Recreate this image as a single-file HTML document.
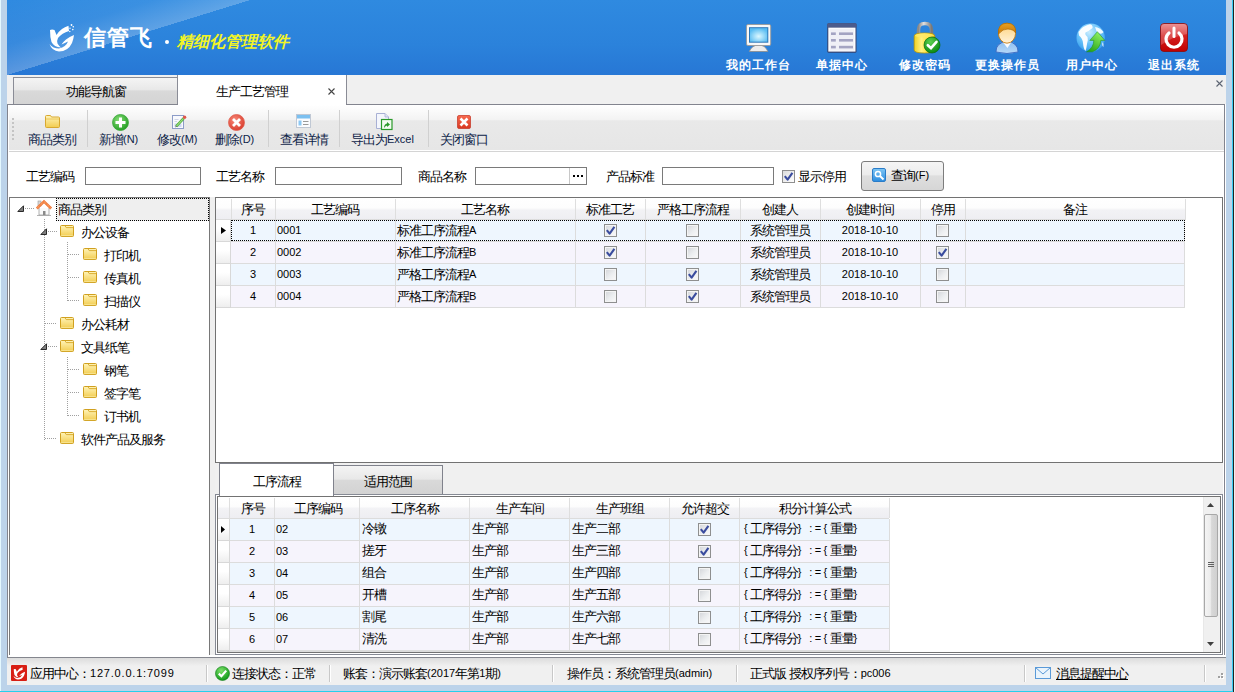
<!DOCTYPE html><html><head><meta charset="utf-8"><style>
*{margin:0;padding:0;box-sizing:border-box}
html,body{width:1235px;height:692px;overflow:hidden;background:#bcd3ea;font-family:"Liberation Sans",sans-serif;font-size:12px;color:#000}
.a{position:absolute}
.t{position:absolute;white-space:nowrap;line-height:14px;font-size:13px;letter-spacing:-1px}
.m{font-family:"Liberation Sans",sans-serif;font-size:11px;position:relative;top:-1px;letter-spacing:0}
svg{position:absolute;overflow:visible}
</style></head><body>
<div class="a" style="left:0px;top:0px;width:1px;height:692px;background:#e4f8ff"></div>
<div class="a" style="left:1232px;top:0px;width:1px;height:692px;background:#38ccf4"></div>
<div class="a" style="left:1233px;top:0px;width:1px;height:692px;background:#222"></div>
<div class="a" style="left:1234px;top:0px;width:1px;height:692px;background:#f0f0f0"></div>
<div class="a" style="left:0px;top:691px;width:1232px;height:1px;background:#26d0ec"></div>
<div class="a" style="left:7px;top:0px;width:1219px;height:75px;background:linear-gradient(180deg,#2f8ae0 0%,#2b82db 60%,#2777d5 100%)"></div>
<div class="a" style="left:7px;top:0px;width:243px;height:75px;background:linear-gradient(to bottom right,rgba(255,255,255,0) 0%,rgba(255,255,255,0.06) 30%,rgba(255,255,255,0.24) 50%,rgba(255,255,255,0) 50.1%)"></div>

<svg style="left:746px;top:24px" width="26" height="28" viewBox="0 0 26 28">
 <defs><radialGradient id="scr" cx="0.5" cy="0.6" r="0.6"><stop offset="0" stop-color="#dcf8ff"/><stop offset="1" stop-color="#58bcf2"/></radialGradient></defs>
 <path d="M3.3 27.5 Q6 21 12.6 21 Q19.2 21 21.9 27.5 Z" fill="#ececec" stroke="#8a8a8a" stroke-width="0.8"/>
 <rect x="0.5" y="0.5" width="24.2" height="21" rx="1.5" fill="#f8f8f8" stroke="#9a9a9a" stroke-width="0.9"/>
 <rect x="3" y="3.2" width="19.3" height="15.5" fill="#2a76b8"/>
 <rect x="4" y="4.2" width="17.3" height="13.5" fill="url(#scr)"/>
</svg>
<svg style="left:827px;top:23px" width="30" height="30" viewBox="0 0 30 30">
 <rect x="0.3" y="0.3" width="29.2" height="29.4" rx="1.5" fill="#34406c"/>
 <rect x="0.3" y="0.3" width="29.2" height="4.3" rx="1" fill="#4c5c8c"/>
 <rect x="1.3" y="4.6" width="27.2" height="24" fill="#fbfbfd"/>
 <rect x="3" y="6" width="24" height="21.5" fill="#f0f0f6"/>
 <rect x="4" y="9.4" width="4.8" height="2.6" fill="#a4a4c2"/><rect x="12" y="9.4" width="14" height="2.6" fill="#a4a4c2"/>
 <rect x="4" y="16" width="4.8" height="2.6" fill="#a4a4c2"/><rect x="12" y="16" width="14" height="2.6" fill="#a4a4c2"/>
 <rect x="4" y="22.8" width="4.8" height="2.6" fill="#a4a4c2"/><rect x="12" y="22.8" width="14" height="2.6" fill="#a4a4c2"/>
</svg>
<svg style="left:913px;top:22px" width="28" height="32" viewBox="0 0 28 32">
 <defs><linearGradient id="lk" x1="0" y1="0" x2="1" y2="0"><stop offset="0" stop-color="#f0d020"/><stop offset="0.35" stop-color="#fff080"/><stop offset="0.7" stop-color="#ffe030"/><stop offset="1" stop-color="#d8a800"/></linearGradient>
 <linearGradient id="sh" x1="0" y1="0" x2="1" y2="0"><stop offset="0" stop-color="#8a8a8a"/><stop offset="0.4" stop-color="#e0e0e0"/><stop offset="1" stop-color="#7a7a7a"/></linearGradient>
 <radialGradient id="gc" cx="0.4" cy="0.3" r="0.7"><stop offset="0" stop-color="#5cd050"/><stop offset="1" stop-color="#0a8a12"/></radialGradient></defs>
 <path d="M5.5 16 V8 Q5.5 1.5 12 1.5 Q18.5 1.5 18.5 8 V16" fill="none" stroke="url(#sh)" stroke-width="3.4"/>
 <path d="M1.2 14 Q1.2 11 11.5 11 Q21.8 11 21.8 14 V28 Q21.8 31 11.5 31 Q1.2 31 1.2 28 Z" fill="url(#lk)" stroke="#c09a00" stroke-width="0.8"/>
 <ellipse cx="11.5" cy="13.5" rx="9.5" ry="2.2" fill="#ffe868" opacity="0.8"/>
 <circle cx="19" cy="23" r="8" fill="url(#gc)" stroke="#0b6a12" stroke-width="0.7"/>
 <path d="M14.8 23.2 L18 26.2 L23.5 19.8" stroke="#fff" stroke-width="2.6" fill="none" stroke-linecap="round"/>
</svg>
<svg style="left:995px;top:22px" width="24" height="32" viewBox="0 0 24 32">
 <defs><linearGradient id="fc" x1="0" y1="0" x2="0" y2="1"><stop offset="0" stop-color="#ffd27a"/><stop offset="1" stop-color="#fff2d8"/></linearGradient>
 <linearGradient id="bd" x1="0" y1="0" x2="0" y2="1"><stop offset="0" stop-color="#8cbef0"/><stop offset="1" stop-color="#b6d8f8"/></linearGradient>
 <linearGradient id="hr" x1="0" y1="0" x2="0" y2="1"><stop offset="0" stop-color="#e8a020"/><stop offset="1" stop-color="#c87808"/></linearGradient></defs>
 <path d="M1 30 Q0.5 21 12 19 Q23.5 21 23 30 Q12 33 1 30 Z" fill="url(#bd)" stroke="#3a66c0" stroke-width="0.9"/>
 <path d="M7.5 19.8 L12.5 26 L16.5 19.8 Z" fill="#fafcff"/>
 <ellipse cx="12" cy="11.2" rx="8.6" ry="10" fill="url(#fc)" stroke="#c47a10" stroke-width="0.9"/>
 <path d="M3.5 12 Q2.5 1.2 12 1.2 Q21.5 1.2 20.6 11 Q19 7.5 13 7 Q8 6.5 3.5 12 Z" fill="url(#hr)" stroke="#b06a00" stroke-width="0.7"/>
</svg>
<svg style="left:1076px;top:23px" width="30" height="30" viewBox="0 0 30 30">
 <defs><radialGradient id="gl" cx="0.45" cy="0.3" r="0.75"><stop offset="0" stop-color="#c8ecff"/><stop offset="0.5" stop-color="#6cc4fa"/><stop offset="1" stop-color="#2a98ea"/></radialGradient>
 <linearGradient id="ar" x1="0" y1="1" x2="0.6" y2="0"><stop offset="0" stop-color="#1a9a10"/><stop offset="1" stop-color="#8ef060"/></linearGradient></defs>
 <circle cx="14.7" cy="14.8" r="14.2" fill="url(#gl)"/>
 <path d="M2.5 9 Q6 3 14 1.2 Q17 2 16.5 5 Q13 8 9.5 9.5 Q8.5 11.5 11.5 14 Q12.5 17 11 21 Q10.5 25 9.5 28 Q7.5 26 7 20 Q6.5 15 3 12.5 Z" fill="#fff" opacity="0.95"/>
 <path d="M19 4 Q24 4.5 27.5 9 Q26 12 22 10 Q20 8 19 4 Z" fill="#fff" opacity="0.9"/>
 <path d="M26.5 19 Q28 20.5 27.5 24 Q25.5 23 26.5 19 Z" fill="#fff" opacity="0.8"/>
 <path d="M21.4 8.7 L28.8 17.4 L24.8 17.4 Q24.5 25.5 16.5 28.8 L10.5 28.8 Q17.8 24.5 17.8 17.4 L13.8 17.4 Z" fill="url(#ar)" stroke="#1c8a10" stroke-width="0.5"/>
</svg>
<svg style="left:1160px;top:23px" width="28" height="29" viewBox="0 0 28 29">
 <defs><linearGradient id="pw" x1="0" y1="0" x2="0" y2="1"><stop offset="0" stop-color="#e8787a"/><stop offset="0.45" stop-color="#d42020"/><stop offset="1" stop-color="#c00000"/></linearGradient></defs>
 <rect x="0.5" y="0.5" width="27" height="28" rx="3.5" fill="url(#pw)" stroke="#8c0a0a" stroke-width="0.8"/>
 <path d="M1 4 Q1 1 4 1 H24 Q27 1 27 4 V11 Q14 13 1 22 Z" fill="#fff" opacity="0.2"/>
 <path d="M9 10 A8 8 0 1 0 19 10" fill="none" stroke="#fff" stroke-width="3.2" stroke-linecap="round"/>
 <path d="M14 5 V13.5" stroke="#fff" stroke-width="3" stroke-linecap="round"/>
</svg>
<svg style="left:45px;top:20px" width="35" height="35" viewBox="0 0 35 35">
 <path d="M5 10 Q7 9 9.5 10 L11.5 15 Q16 8 23.5 5.8 L24 11 Q17 13 13 18 Q11.5 21 12.5 23.5 Q14 26 16 27.5 Q9 27 6.5 22 Q5 17 5 10 Z" fill="#fff"/>
 <path d="M4.5 24 Q7 31 14 31.5 Q23 31.5 27 23 Q28.5 19 29 15 Q24 17 21 19.5 Q18 22 16.5 24.5 Q20 23 23 21.5 Q21 27 14 28.5 Q8 28.5 4.5 24 Z" fill="#fff"/>
 <circle cx="26.5" cy="5" r="0.9" fill="#fff"/><circle cx="28.3" cy="6.8" r="0.8" fill="#fff"/><circle cx="27.8" cy="9.6" r="0.8" fill="#fff"/><circle cx="25" cy="8.2" r="0.7" fill="#fff"/><circle cx="24.8" cy="11.5" r="0.7" fill="#fff"/>
</svg>

<div class="t" style="left:726px;top:58px;color:#fff;font-weight:bold;font-size:12px;letter-spacing:1px">我的工作台</div>
<div class="t" style="left:816px;top:58px;color:#fff;font-weight:bold;font-size:12px;letter-spacing:1px">单据中心</div>
<div class="t" style="left:899px;top:58px;color:#fff;font-weight:bold;font-size:12px;letter-spacing:1px">修改密码</div>
<div class="t" style="left:975px;top:58px;color:#fff;font-weight:bold;font-size:12px;letter-spacing:1px">更换操作员</div>
<div class="t" style="left:1066px;top:58px;color:#fff;font-weight:bold;font-size:12px;letter-spacing:1px">用户中心</div>
<div class="t" style="left:1148px;top:58px;color:#fff;font-weight:bold;font-size:12px;letter-spacing:1px">退出系统</div>
<div class="t" style="left:84px;top:25px;font-size:22px;line-height:26px;color:#fff;letter-spacing:1px;font-weight:bold">信管飞</div>
<div class="a" style="left:165px;top:40px;width:4px;height:4px;border-radius:2px;background:#fff"></div>
<div class="t" style="left:177px;top:32px;font-size:16px;line-height:20px;color:#f2f426;font-style:italic;font-weight:bold;letter-spacing:0">精细化管理软件</div>
<div class="a" style="left:7px;top:75px;width:1219px;height:29px;background:#f0f0f0"></div>
<div class="a" style="left:13px;top:77px;width:165px;height:28px;border:1px solid #8a8c96;background:linear-gradient(180deg,#f4f4f4 0%,#e8e8e8 45%,#d9d9d9 50%,#d4d4d4 100%)"></div>
<div class="t" style="left:13px;top:85px;width:165px;text-align:center;">功能导航窗</div>
<div class="a" style="left:177px;top:75px;width:170px;height:30px;border:1px solid #8a8c96;border-top:none;border-bottom:none;background:#fff"></div>
<div class="t" style="left:216px;top:85px;">生产工艺管理</div>
<svg style="left:328px;top:88px" width="7" height="7"><path d="M0.5 0.5L6.5 6.5M6.5 0.5L0.5 6.5" stroke="#444" stroke-width="1.1"/></svg>
<svg style="left:1216px;top:80px" width="7" height="7"><path d="M0.5 0.5L6.5 6.5M6.5 0.5L0.5 6.5" stroke="#5c6472" stroke-width="1.1"/></svg>
<div class="a" style="left:7px;top:104px;width:1218px;height:554px;background:#fff;border-top:1px solid #82848e;border-left:1px solid #82848e;border-right:1px solid #82848e"></div>
<div class="a" style="left:178px;top:104px;width:168px;height:1px;background:#fff"></div>
<div class="a" style="left:1225px;top:104px;width:1px;height:554px;background:#fff"></div>
<div class="a" style="left:9px;top:105px;width:1215px;height:45px;background:linear-gradient(180deg,#ffffff 0%,#f3f3f3 33%,#e9e9e9 35%,#e6e6e6 100%)"></div>
<div class="a" style="left:9px;top:151px;width:1215px;height:1px;background:#d4d4d4"></div>
<div class="a" style="left:12px;top:118px;width:2px;height:2px;background:#c4c4c4"></div>
<div class="a" style="left:12px;top:122px;width:2px;height:2px;background:#c4c4c4"></div>
<div class="a" style="left:12px;top:126px;width:2px;height:2px;background:#c4c4c4"></div>
<div class="a" style="left:12px;top:130px;width:2px;height:2px;background:#c4c4c4"></div>
<div class="a" style="left:12px;top:134px;width:2px;height:2px;background:#c4c4c4"></div>
<div class="a" style="left:12px;top:138px;width:2px;height:2px;background:#c4c4c4"></div>
<div class="a" style="left:87px;top:110px;width:1px;height:37px;background:#d0d0d0"></div>
<div class="a" style="left:268px;top:110px;width:1px;height:37px;background:#d0d0d0"></div>
<div class="a" style="left:339px;top:110px;width:1px;height:37px;background:#d0d0d0"></div>
<div class="a" style="left:428px;top:110px;width:1px;height:37px;background:#d0d0d0"></div>

<svg style="left:45px;top:115px" width="15" height="13" viewBox="0 0 15 13">
 <defs><linearGradient id="fd" x1="0" y1="0" x2="0" y2="1"><stop offset="0" stop-color="#fff4b8"/><stop offset="1" stop-color="#f2cc50"/></linearGradient></defs>
 <path d="M0.5 1.5 Q0.5 0.5 1.5 0.5 H5.5 L6.5 2 H13.5 Q14.5 2 14.5 3 V11.5 Q14.5 12.5 13.5 12.5 H1.5 Q0.5 12.5 0.5 11.5 Z" fill="url(#fd)" stroke="#d8a830" stroke-width="1"/>
 <path d="M1 4 H14" stroke="#e8c050" stroke-width="0.8"/>
</svg>
<svg style="left:112px;top:114px" width="17" height="17" viewBox="0 0 17 17">
 <defs><radialGradient id="gp" cx="0.4" cy="0.35" r="0.7"><stop offset="0" stop-color="#8ae07a"/><stop offset="1" stop-color="#1e9a1e"/></radialGradient></defs>
 <circle cx="8.5" cy="8.5" r="8" fill="url(#gp)" stroke="#3aa83a" stroke-width="0.8"/>
 <path d="M8.5 3.5 V13.5 M3.5 8.5 H13.5" stroke="#fff" stroke-width="3"/>
</svg>
<svg style="left:172px;top:114px" width="15" height="16" viewBox="0 0 15 16">
 <rect x="0.5" y="1.5" width="11" height="13" fill="#f8f9fd" stroke="#8c9cc8" stroke-width="1"/>
 <path d="M2.5 5.5 H6.5 M2.5 7.5 H5" stroke="#c4cce0" stroke-width="0.8"/>
 <rect x="2.5" y="9.5" width="7" height="3.5" fill="#cdd8f0"/>
 <path d="M4.2 12.3 L11.6 4.4" stroke="#4aa838" stroke-width="2.6"/>
 <path d="M4.2 12.3 L11.6 4.4" stroke="#9ce07c" stroke-width="1.2"/>
 <path d="M3.2 13.4 L4 11.6 L5 12.6 Z" fill="#606060"/>
 <circle cx="12.6" cy="3.3" r="1.7" fill="#e0584a"/>
</svg>
<svg style="left:228px;top:114px" width="17" height="17" viewBox="0 0 17 17">
 <defs><radialGradient id="rx" cx="0.4" cy="0.35" r="0.7"><stop offset="0" stop-color="#f88a7a"/><stop offset="1" stop-color="#d83a2a"/></radialGradient></defs>
 <circle cx="8.5" cy="8.5" r="8" fill="url(#rx)" stroke="#e06050" stroke-width="0.8"/>
 <path d="M5 5 L12 12 M12 5 L5 12" stroke="#fff" stroke-width="2.8"/>
</svg>
<svg style="left:296px;top:114px" width="15" height="14" viewBox="0 0 15 14">
 <rect x="0.5" y="0.5" width="14" height="13" fill="#fbfcff" stroke="#c0c8d4" stroke-width="1"/>
 <rect x="1" y="1" width="13" height="3.5" fill="#7cc0f0"/>
 <rect x="2.5" y="6.5" width="3" height="5" fill="#8cc8f4"/>
 <path d="M7 7.5 H12.5 M7 10.5 H12.5" stroke="#9a9a9a" stroke-width="1"/>
</svg>
<svg style="left:376px;top:113px" width="17" height="17" viewBox="0 0 17 17">
 <path d="M0.5 0.5 H9 L12.5 4 V15.5 H0.5 Z" fill="#f4f6fc" stroke="#a8b0d4" stroke-width="1"/>
 <path d="M9 0.5 V4 H12.5" fill="#dde4f4" stroke="#a8b0d4" stroke-width="0.8"/>
 <rect x="5.5" y="6.5" width="10.5" height="10" fill="#f2fbf0" stroke="#2a9a2a" stroke-width="1.2"/>
 <path d="M8 15 Q8 11 11 10.5 V9 L14 11.5 L11 14 V12.5 Q9.5 12.5 8 15 Z" fill="#2a9a2a"/>
</svg>
<svg style="left:457px;top:115px" width="14" height="14" viewBox="0 0 14 14">
 <defs><linearGradient id="cx" x1="0" y1="0" x2="0" y2="1"><stop offset="0" stop-color="#f86a50"/><stop offset="1" stop-color="#d83820"/></linearGradient></defs>
 <rect x="0.5" y="0.5" width="13" height="13" rx="1.5" fill="url(#cx)" stroke="#c84030" stroke-width="0.8"/>
 <path d="M3.5 3.5 L10.5 10.5 M10.5 3.5 L3.5 10.5" stroke="#fff" stroke-width="2.6"/>
</svg>

<div class="t" style="left:28px;top:133px;color:#0e2448">商品类别</div>
<div class="t" style="left:99px;top:133px;color:#0e2448">新增<span class="m">(N)</span></div>
<div class="t" style="left:157px;top:133px;color:#0e2448">修改<span class="m">(M)</span></div>
<div class="t" style="left:215px;top:133px;color:#0e2448">删除<span class="m">(D)</span></div>
<div class="t" style="left:280px;top:133px;color:#0e2448">查看详情</div>
<div class="t" style="left:351px;top:133px;color:#0e2448">导出为<span class="m">Excel</span></div>
<div class="t" style="left:440px;top:133px;color:#0e2448">关闭窗口</div>
<div class="t" style="left:26px;top:170px;">工艺编码</div>
<div class="a" style="left:85px;top:167px;width:116px;height:18px;border:1px solid #7a7a7a;background:#fff"></div>
<div class="t" style="left:216px;top:170px;">工艺名称</div>
<div class="a" style="left:275px;top:167px;width:127px;height:18px;border:1px solid #7a7a7a;background:#fff"></div>
<div class="t" style="left:418px;top:170px;">商品名称</div>
<div class="a" style="left:475px;top:167px;width:112px;height:18px;border:1px solid #7a7a7a;background:#fff"></div>
<div class="a" style="left:569px;top:168px;width:1px;height:16px;background:#c8c8c8"></div>
<div class="a" style="left:573px;top:175px;width:2px;height:2px;background:#000"></div>
<div class="a" style="left:577px;top:175px;width:2px;height:2px;background:#000"></div>
<div class="a" style="left:581px;top:175px;width:2px;height:2px;background:#000"></div>
<div class="t" style="left:606px;top:170px;">产品标准</div>
<div class="a" style="left:662px;top:167px;width:112px;height:18px;border:1px solid #7a7a7a;background:#fff"></div>
<div class="a" style="left:782px;top:170px;width:13px;height:13px;border:1px solid #8f8f8f;background:linear-gradient(135deg,#dcdcdc,#fff)"></div>
<svg style="left:784px;top:172px" width="9" height="9"><path d="M0.8 4.2 L3.6 7.6 L8.4 0.8" stroke="#3a4c9e" stroke-width="2.1" fill="none" stroke-linejoin="round"/></svg>
<div class="t" style="left:798px;top:170px;">显示停用</div>
<div class="a" style="left:861px;top:161px;width:83px;height:30px;border:1px solid #7d7d7d;border-radius:3px;background:linear-gradient(180deg,#f5f5f5 0%,#ececec 45%,#dedede 50%,#d6d6d6 100%)"></div>
<div class="a" style="left:872px;top:168px;width:14px;height:14px;border-radius:2px;background:linear-gradient(180deg,#7cc4f4,#2e8ee0);border:1px solid #2a7cc8"></div>
<svg style="left:874px;top:170px" width="11" height="11"><circle cx="4" cy="4" r="2.6" stroke="#fff" stroke-width="1.5" fill="none"/><path d="M6 6L9.5 9.5" stroke="#fff" stroke-width="2"/></svg>
<div class="t" style="left:891px;top:169px;">查询<span class="m">(F)</span></div>
<div class="a" style="left:9px;top:197px;width:201px;height:459px;border:1px solid #787878;background:#fff"></div>
<div class="a" style="left:210px;top:197px;width:5px;height:459px;background:#efefef"></div>
<div class="a" style="left:44px;top:219px;width:1px;height:221px;background:repeating-linear-gradient(180deg,#a0a0a0 0 1px,transparent 1px 2px)"></div>
<div class="a" style="left:67px;top:242px;width:1px;height:60px;background:repeating-linear-gradient(180deg,#a0a0a0 0 1px,transparent 1px 2px)"></div>
<div class="a" style="left:67px;top:357px;width:1px;height:60px;background:repeating-linear-gradient(180deg,#a0a0a0 0 1px,transparent 1px 2px)"></div>
<div class="a" style="left:25px;top:208px;width:9px;height:1px;background:repeating-linear-gradient(90deg,#a0a0a0 0 1px,transparent 1px 2px)"></div>
<svg style="left:17px;top:205px" width="7" height="7" viewBox="0 0 7 7"><path d="M6.5 0.8 V6.5 H0.8 Z" fill="#808080" stroke="#2a2a2a" stroke-width="1" stroke-linejoin="round"/></svg>
<svg style="left:36px;top:200px" width="16" height="16" viewBox="0 0 16 16"><rect x="2" y="1" width="3" height="5" fill="#d8d8d8" stroke="#9a9a9a" stroke-width="0.6"/><path d="M3 8 V15 H13 V8" fill="#fafafa" stroke="#a0a0a0" stroke-width="0.8"/><rect x="7" y="11" width="2.5" height="4" fill="#8a8a8a"/><path d="M0.8 8.5 L8 1.5 L15.2 8.5" fill="none" stroke="#f07a3a" stroke-width="2.6"/><path d="M0.8 8.5 L8 1.5 L15.2 8.5" fill="none" stroke="#ffc8a0" stroke-width="0.8" stroke-dasharray="1 1"/><path d="M1 15.5 H15" stroke="#a0a0a0" stroke-width="0.8"/></svg>
<div class="a" style="left:56px;top:198px;width:153px;height:23px;background:#efefef;border:1px dotted #000"></div>
<div class="t" style="left:58px;top:203px;">商品类别</div>
<svg style="left:40px;top:228px" width="7" height="7" viewBox="0 0 7 7"><path d="M6.5 0.8 V6.5 H0.8 Z" fill="#808080" stroke="#2a2a2a" stroke-width="1" stroke-linejoin="round"/></svg>
<div class="a" style="left:48px;top:231px;width:9px;height:1px;background:repeating-linear-gradient(90deg,#a0a0a0 0 1px,transparent 1px 2px)"></div>
<svg style="left:60px;top:225px" width="14" height="12" viewBox="0 0 14 12"><rect x="0.5" y="0.5" width="13" height="11" rx="1" fill="url(#fd)" stroke="#d0a020" stroke-width="1"/><path d="M5 0.8 L6.2 2.6 H13" fill="none" stroke="#d8a828" stroke-width="0.9"/><path d="M1.3 10.6 H12.7" stroke="#f8e8a0" stroke-width="0.8"/></svg>
<div class="t" style="left:81px;top:226px;">办公设备</div>
<div class="a" style="left:68px;top:254px;width:11px;height:1px;background:repeating-linear-gradient(90deg,#a0a0a0 0 1px,transparent 1px 2px)"></div>
<svg style="left:83px;top:248px" width="14" height="12" viewBox="0 0 14 12"><rect x="0.5" y="0.5" width="13" height="11" rx="1" fill="url(#fd)" stroke="#d0a020" stroke-width="1"/><path d="M5 0.8 L6.2 2.6 H13" fill="none" stroke="#d8a828" stroke-width="0.9"/><path d="M1.3 10.6 H12.7" stroke="#f8e8a0" stroke-width="0.8"/></svg>
<div class="t" style="left:104px;top:249px;">打印机</div>
<div class="a" style="left:68px;top:277px;width:11px;height:1px;background:repeating-linear-gradient(90deg,#a0a0a0 0 1px,transparent 1px 2px)"></div>
<svg style="left:83px;top:271px" width="14" height="12" viewBox="0 0 14 12"><rect x="0.5" y="0.5" width="13" height="11" rx="1" fill="url(#fd)" stroke="#d0a020" stroke-width="1"/><path d="M5 0.8 L6.2 2.6 H13" fill="none" stroke="#d8a828" stroke-width="0.9"/><path d="M1.3 10.6 H12.7" stroke="#f8e8a0" stroke-width="0.8"/></svg>
<div class="t" style="left:104px;top:272px;">传真机</div>
<div class="a" style="left:68px;top:300px;width:11px;height:1px;background:repeating-linear-gradient(90deg,#a0a0a0 0 1px,transparent 1px 2px)"></div>
<svg style="left:83px;top:294px" width="14" height="12" viewBox="0 0 14 12"><rect x="0.5" y="0.5" width="13" height="11" rx="1" fill="url(#fd)" stroke="#d0a020" stroke-width="1"/><path d="M5 0.8 L6.2 2.6 H13" fill="none" stroke="#d8a828" stroke-width="0.9"/><path d="M1.3 10.6 H12.7" stroke="#f8e8a0" stroke-width="0.8"/></svg>
<div class="t" style="left:104px;top:295px;">扫描仪</div>
<div class="a" style="left:45px;top:323px;width:12px;height:1px;background:repeating-linear-gradient(90deg,#a0a0a0 0 1px,transparent 1px 2px)"></div>
<svg style="left:60px;top:317px" width="14" height="12" viewBox="0 0 14 12"><rect x="0.5" y="0.5" width="13" height="11" rx="1" fill="url(#fd)" stroke="#d0a020" stroke-width="1"/><path d="M5 0.8 L6.2 2.6 H13" fill="none" stroke="#d8a828" stroke-width="0.9"/><path d="M1.3 10.6 H12.7" stroke="#f8e8a0" stroke-width="0.8"/></svg>
<div class="t" style="left:81px;top:318px;">办公耗材</div>
<svg style="left:40px;top:343px" width="7" height="7" viewBox="0 0 7 7"><path d="M6.5 0.8 V6.5 H0.8 Z" fill="#808080" stroke="#2a2a2a" stroke-width="1" stroke-linejoin="round"/></svg>
<div class="a" style="left:48px;top:346px;width:9px;height:1px;background:repeating-linear-gradient(90deg,#a0a0a0 0 1px,transparent 1px 2px)"></div>
<svg style="left:60px;top:340px" width="14" height="12" viewBox="0 0 14 12"><rect x="0.5" y="0.5" width="13" height="11" rx="1" fill="url(#fd)" stroke="#d0a020" stroke-width="1"/><path d="M5 0.8 L6.2 2.6 H13" fill="none" stroke="#d8a828" stroke-width="0.9"/><path d="M1.3 10.6 H12.7" stroke="#f8e8a0" stroke-width="0.8"/></svg>
<div class="t" style="left:81px;top:341px;">文具纸笔</div>
<div class="a" style="left:68px;top:369px;width:11px;height:1px;background:repeating-linear-gradient(90deg,#a0a0a0 0 1px,transparent 1px 2px)"></div>
<svg style="left:83px;top:363px" width="14" height="12" viewBox="0 0 14 12"><rect x="0.5" y="0.5" width="13" height="11" rx="1" fill="url(#fd)" stroke="#d0a020" stroke-width="1"/><path d="M5 0.8 L6.2 2.6 H13" fill="none" stroke="#d8a828" stroke-width="0.9"/><path d="M1.3 10.6 H12.7" stroke="#f8e8a0" stroke-width="0.8"/></svg>
<div class="t" style="left:104px;top:364px;">钢笔</div>
<div class="a" style="left:68px;top:392px;width:11px;height:1px;background:repeating-linear-gradient(90deg,#a0a0a0 0 1px,transparent 1px 2px)"></div>
<svg style="left:83px;top:386px" width="14" height="12" viewBox="0 0 14 12"><rect x="0.5" y="0.5" width="13" height="11" rx="1" fill="url(#fd)" stroke="#d0a020" stroke-width="1"/><path d="M5 0.8 L6.2 2.6 H13" fill="none" stroke="#d8a828" stroke-width="0.9"/><path d="M1.3 10.6 H12.7" stroke="#f8e8a0" stroke-width="0.8"/></svg>
<div class="t" style="left:104px;top:387px;">签字笔</div>
<div class="a" style="left:68px;top:415px;width:11px;height:1px;background:repeating-linear-gradient(90deg,#a0a0a0 0 1px,transparent 1px 2px)"></div>
<svg style="left:83px;top:409px" width="14" height="12" viewBox="0 0 14 12"><rect x="0.5" y="0.5" width="13" height="11" rx="1" fill="url(#fd)" stroke="#d0a020" stroke-width="1"/><path d="M5 0.8 L6.2 2.6 H13" fill="none" stroke="#d8a828" stroke-width="0.9"/><path d="M1.3 10.6 H12.7" stroke="#f8e8a0" stroke-width="0.8"/></svg>
<div class="t" style="left:104px;top:410px;">订书机</div>
<div class="a" style="left:45px;top:438px;width:12px;height:1px;background:repeating-linear-gradient(90deg,#a0a0a0 0 1px,transparent 1px 2px)"></div>
<svg style="left:60px;top:432px" width="14" height="12" viewBox="0 0 14 12"><rect x="0.5" y="0.5" width="13" height="11" rx="1" fill="url(#fd)" stroke="#d0a020" stroke-width="1"/><path d="M5 0.8 L6.2 2.6 H13" fill="none" stroke="#d8a828" stroke-width="0.9"/><path d="M1.3 10.6 H12.7" stroke="#f8e8a0" stroke-width="0.8"/></svg>
<div class="t" style="left:81px;top:433px;">软件产品及服务</div>
<div class="a" style="left:215px;top:197px;width:1008px;height:266px;border:1px solid #727272;background:#fff"></div>
<div class="a" style="left:216px;top:198px;width:15px;height:22px;background:linear-gradient(180deg,#fff 0%,#fdfdfd 45%,#f2f2f5 55%,#eeeef2 100%)"></div><div class="a" style="left:231px;top:199px;width:1px;height:21px;background:#dedede"></div>
<div class="a" style="left:231px;top:198px;width:44px;height:22px;background:linear-gradient(180deg,#fff 0%,#fdfdfd 45%,#f2f2f5 55%,#eeeef2 100%)"></div><div class="a" style="left:231px;top:199px;width:1px;height:21px;background:#dedede"></div><div class="a" style="left:275px;top:199px;width:1px;height:21px;background:#dedede"></div>
<div class="t" style="left:231px;top:203px;width:44px;text-align:center;">序号</div>
<div class="a" style="left:275px;top:198px;width:120px;height:22px;background:linear-gradient(180deg,#fff 0%,#fdfdfd 45%,#f2f2f5 55%,#eeeef2 100%)"></div><div class="a" style="left:275px;top:199px;width:1px;height:21px;background:#dedede"></div><div class="a" style="left:395px;top:199px;width:1px;height:21px;background:#dedede"></div>
<div class="t" style="left:275px;top:203px;width:120px;text-align:center;">工艺编码</div>
<div class="a" style="left:395px;top:198px;width:180px;height:22px;background:linear-gradient(180deg,#fff 0%,#fdfdfd 45%,#f2f2f5 55%,#eeeef2 100%)"></div><div class="a" style="left:395px;top:199px;width:1px;height:21px;background:#dedede"></div><div class="a" style="left:575px;top:199px;width:1px;height:21px;background:#dedede"></div>
<div class="t" style="left:395px;top:203px;width:180px;text-align:center;">工艺名称</div>
<div class="a" style="left:575px;top:198px;width:70px;height:22px;background:linear-gradient(180deg,#fff 0%,#fdfdfd 45%,#f2f2f5 55%,#eeeef2 100%)"></div><div class="a" style="left:575px;top:199px;width:1px;height:21px;background:#dedede"></div><div class="a" style="left:645px;top:199px;width:1px;height:21px;background:#dedede"></div>
<div class="t" style="left:575px;top:203px;width:70px;text-align:center;">标准工艺</div>
<div class="a" style="left:645px;top:198px;width:95px;height:22px;background:linear-gradient(180deg,#fff 0%,#fdfdfd 45%,#f2f2f5 55%,#eeeef2 100%)"></div><div class="a" style="left:645px;top:199px;width:1px;height:21px;background:#dedede"></div><div class="a" style="left:740px;top:199px;width:1px;height:21px;background:#dedede"></div>
<div class="t" style="left:645px;top:203px;width:95px;text-align:center;">严格工序流程</div>
<div class="a" style="left:740px;top:198px;width:80px;height:22px;background:linear-gradient(180deg,#fff 0%,#fdfdfd 45%,#f2f2f5 55%,#eeeef2 100%)"></div><div class="a" style="left:740px;top:199px;width:1px;height:21px;background:#dedede"></div><div class="a" style="left:820px;top:199px;width:1px;height:21px;background:#dedede"></div>
<div class="t" style="left:740px;top:203px;width:80px;text-align:center;">创建人</div>
<div class="a" style="left:820px;top:198px;width:100px;height:22px;background:linear-gradient(180deg,#fff 0%,#fdfdfd 45%,#f2f2f5 55%,#eeeef2 100%)"></div><div class="a" style="left:820px;top:199px;width:1px;height:21px;background:#dedede"></div><div class="a" style="left:920px;top:199px;width:1px;height:21px;background:#dedede"></div>
<div class="t" style="left:820px;top:203px;width:100px;text-align:center;">创建时间</div>
<div class="a" style="left:920px;top:198px;width:45px;height:22px;background:linear-gradient(180deg,#fff 0%,#fdfdfd 45%,#f2f2f5 55%,#eeeef2 100%)"></div><div class="a" style="left:920px;top:199px;width:1px;height:21px;background:#dedede"></div><div class="a" style="left:965px;top:199px;width:1px;height:21px;background:#dedede"></div>
<div class="t" style="left:920px;top:203px;width:45px;text-align:center;">停用</div>
<div class="a" style="left:965px;top:198px;width:220px;height:22px;background:linear-gradient(180deg,#fff 0%,#fdfdfd 45%,#f2f2f5 55%,#eeeef2 100%)"></div><div class="a" style="left:965px;top:199px;width:1px;height:21px;background:#dedede"></div><div class="a" style="left:1185px;top:199px;width:1px;height:21px;background:#dedede"></div>
<div class="t" style="left:965px;top:203px;width:220px;text-align:center;">备注</div>
<div class="a" style="left:216px;top:219px;width:969px;height:1px;background:#dcdcdc"></div>
<div class="a" style="left:216px;top:220px;width:15px;height:22px;background:linear-gradient(180deg,#fff 0%,#fff 40%,#eeeeee 100%);border-right:1px solid #d8d8d8;border-bottom:1px solid #d8d8d8"></div>
<div class="a" style="left:231px;top:220px;width:954px;height:22px;background:#eef6fe;border-bottom:1px solid #dcdcdc"></div>
<div class="a" style="left:275px;top:220px;width:1px;height:22px;background:#dcdcdc"></div>
<div class="a" style="left:395px;top:220px;width:1px;height:22px;background:#dcdcdc"></div>
<div class="a" style="left:575px;top:220px;width:1px;height:22px;background:#dcdcdc"></div>
<div class="a" style="left:645px;top:220px;width:1px;height:22px;background:#dcdcdc"></div>
<div class="a" style="left:740px;top:220px;width:1px;height:22px;background:#dcdcdc"></div>
<div class="a" style="left:820px;top:220px;width:1px;height:22px;background:#dcdcdc"></div>
<div class="a" style="left:920px;top:220px;width:1px;height:22px;background:#dcdcdc"></div>
<div class="a" style="left:965px;top:220px;width:1px;height:22px;background:#dcdcdc"></div>
<div class="a" style="left:1184px;top:220px;width:1px;height:22px;background:#dcdcdc"></div>
<div class="t" style="left:231px;top:224px;width:44px;text-align:center;"><span class="m">1</span></div>
<div class="t" style="left:277px;top:224px;"><span class="m">0001</span></div>
<div class="t" style="left:397px;top:224px;">标准工序流程<span class="m">A</span></div>
<div class="a" style="left:604px;top:224px;width:13px;height:13px;border:1px solid #8e8f8f;box-shadow:inset 0 0 0 1px #f4f4f4;background:linear-gradient(135deg,#d2d4d8 0%,#eceef0 55%,#fafafa 100%)"></div><svg style="left:606px;top:226px" width="9" height="9" viewBox="0 0 9 9"><path d="M0.8 4.2 L3.6 7.6 L8.4 0.8" stroke="#3a4c9e" stroke-width="2.1" fill="none" stroke-linejoin="round"/></svg>
<div class="a" style="left:686px;top:224px;width:13px;height:13px;border:1px solid #8e8f8f;box-shadow:inset 0 0 0 1px #f4f4f4;background:linear-gradient(135deg,#d2d4d8 0%,#eceef0 55%,#fafafa 100%)"></div>
<div class="t" style="left:750px;top:224px;">系统管理员</div>
<div class="t" style="left:820px;top:224px;width:100px;text-align:center;"><span class="m">2018-10-10</span></div>
<div class="a" style="left:936px;top:224px;width:13px;height:13px;border:1px solid #8e8f8f;box-shadow:inset 0 0 0 1px #f4f4f4;background:linear-gradient(135deg,#d2d4d8 0%,#eceef0 55%,#fafafa 100%)"></div>
<div class="a" style="left:221px;top:227px;width:5px;height:7px;background:#000;clip-path:polygon(0 0,100% 50%,0 100%)"></div>
<div class="a" style="left:231px;top:220px;width:954px;height:21px;border:1px dotted #000"></div>
<div class="a" style="left:216px;top:242px;width:15px;height:22px;background:linear-gradient(180deg,#fff 0%,#fff 40%,#eeeeee 100%);border-right:1px solid #d8d8d8;border-bottom:1px solid #d8d8d8"></div>
<div class="a" style="left:231px;top:242px;width:954px;height:22px;background:#f6f4fc;border-bottom:1px solid #dcdcdc"></div>
<div class="a" style="left:275px;top:242px;width:1px;height:22px;background:#dcdcdc"></div>
<div class="a" style="left:395px;top:242px;width:1px;height:22px;background:#dcdcdc"></div>
<div class="a" style="left:575px;top:242px;width:1px;height:22px;background:#dcdcdc"></div>
<div class="a" style="left:645px;top:242px;width:1px;height:22px;background:#dcdcdc"></div>
<div class="a" style="left:740px;top:242px;width:1px;height:22px;background:#dcdcdc"></div>
<div class="a" style="left:820px;top:242px;width:1px;height:22px;background:#dcdcdc"></div>
<div class="a" style="left:920px;top:242px;width:1px;height:22px;background:#dcdcdc"></div>
<div class="a" style="left:965px;top:242px;width:1px;height:22px;background:#dcdcdc"></div>
<div class="a" style="left:1184px;top:242px;width:1px;height:22px;background:#dcdcdc"></div>
<div class="t" style="left:231px;top:246px;width:44px;text-align:center;"><span class="m">2</span></div>
<div class="t" style="left:277px;top:246px;"><span class="m">0002</span></div>
<div class="t" style="left:397px;top:246px;">标准工序流程<span class="m">B</span></div>
<div class="a" style="left:604px;top:246px;width:13px;height:13px;border:1px solid #8e8f8f;box-shadow:inset 0 0 0 1px #f4f4f4;background:linear-gradient(135deg,#d2d4d8 0%,#eceef0 55%,#fafafa 100%)"></div><svg style="left:606px;top:248px" width="9" height="9" viewBox="0 0 9 9"><path d="M0.8 4.2 L3.6 7.6 L8.4 0.8" stroke="#3a4c9e" stroke-width="2.1" fill="none" stroke-linejoin="round"/></svg>
<div class="a" style="left:686px;top:246px;width:13px;height:13px;border:1px solid #8e8f8f;box-shadow:inset 0 0 0 1px #f4f4f4;background:linear-gradient(135deg,#d2d4d8 0%,#eceef0 55%,#fafafa 100%)"></div>
<div class="t" style="left:750px;top:246px;">系统管理员</div>
<div class="t" style="left:820px;top:246px;width:100px;text-align:center;"><span class="m">2018-10-10</span></div>
<div class="a" style="left:936px;top:246px;width:13px;height:13px;border:1px solid #8e8f8f;box-shadow:inset 0 0 0 1px #f4f4f4;background:linear-gradient(135deg,#d2d4d8 0%,#eceef0 55%,#fafafa 100%)"></div><svg style="left:938px;top:248px" width="9" height="9" viewBox="0 0 9 9"><path d="M0.8 4.2 L3.6 7.6 L8.4 0.8" stroke="#3a4c9e" stroke-width="2.1" fill="none" stroke-linejoin="round"/></svg>
<div class="a" style="left:216px;top:264px;width:15px;height:22px;background:linear-gradient(180deg,#fff 0%,#fff 40%,#eeeeee 100%);border-right:1px solid #d8d8d8;border-bottom:1px solid #d8d8d8"></div>
<div class="a" style="left:231px;top:264px;width:954px;height:22px;background:#eef6fe;border-bottom:1px solid #dcdcdc"></div>
<div class="a" style="left:275px;top:264px;width:1px;height:22px;background:#dcdcdc"></div>
<div class="a" style="left:395px;top:264px;width:1px;height:22px;background:#dcdcdc"></div>
<div class="a" style="left:575px;top:264px;width:1px;height:22px;background:#dcdcdc"></div>
<div class="a" style="left:645px;top:264px;width:1px;height:22px;background:#dcdcdc"></div>
<div class="a" style="left:740px;top:264px;width:1px;height:22px;background:#dcdcdc"></div>
<div class="a" style="left:820px;top:264px;width:1px;height:22px;background:#dcdcdc"></div>
<div class="a" style="left:920px;top:264px;width:1px;height:22px;background:#dcdcdc"></div>
<div class="a" style="left:965px;top:264px;width:1px;height:22px;background:#dcdcdc"></div>
<div class="a" style="left:1184px;top:264px;width:1px;height:22px;background:#dcdcdc"></div>
<div class="t" style="left:231px;top:268px;width:44px;text-align:center;"><span class="m">3</span></div>
<div class="t" style="left:277px;top:268px;"><span class="m">0003</span></div>
<div class="t" style="left:397px;top:268px;">严格工序流程<span class="m">A</span></div>
<div class="a" style="left:604px;top:268px;width:13px;height:13px;border:1px solid #8e8f8f;box-shadow:inset 0 0 0 1px #f4f4f4;background:linear-gradient(135deg,#d2d4d8 0%,#eceef0 55%,#fafafa 100%)"></div>
<div class="a" style="left:686px;top:268px;width:13px;height:13px;border:1px solid #8e8f8f;box-shadow:inset 0 0 0 1px #f4f4f4;background:linear-gradient(135deg,#d2d4d8 0%,#eceef0 55%,#fafafa 100%)"></div><svg style="left:688px;top:270px" width="9" height="9" viewBox="0 0 9 9"><path d="M0.8 4.2 L3.6 7.6 L8.4 0.8" stroke="#3a4c9e" stroke-width="2.1" fill="none" stroke-linejoin="round"/></svg>
<div class="t" style="left:750px;top:268px;">系统管理员</div>
<div class="t" style="left:820px;top:268px;width:100px;text-align:center;"><span class="m">2018-10-10</span></div>
<div class="a" style="left:936px;top:268px;width:13px;height:13px;border:1px solid #8e8f8f;box-shadow:inset 0 0 0 1px #f4f4f4;background:linear-gradient(135deg,#d2d4d8 0%,#eceef0 55%,#fafafa 100%)"></div>
<div class="a" style="left:216px;top:286px;width:15px;height:22px;background:linear-gradient(180deg,#fff 0%,#fff 40%,#eeeeee 100%);border-right:1px solid #d8d8d8;border-bottom:1px solid #d8d8d8"></div>
<div class="a" style="left:231px;top:286px;width:954px;height:22px;background:#f6f4fc;border-bottom:1px solid #dcdcdc"></div>
<div class="a" style="left:275px;top:286px;width:1px;height:22px;background:#dcdcdc"></div>
<div class="a" style="left:395px;top:286px;width:1px;height:22px;background:#dcdcdc"></div>
<div class="a" style="left:575px;top:286px;width:1px;height:22px;background:#dcdcdc"></div>
<div class="a" style="left:645px;top:286px;width:1px;height:22px;background:#dcdcdc"></div>
<div class="a" style="left:740px;top:286px;width:1px;height:22px;background:#dcdcdc"></div>
<div class="a" style="left:820px;top:286px;width:1px;height:22px;background:#dcdcdc"></div>
<div class="a" style="left:920px;top:286px;width:1px;height:22px;background:#dcdcdc"></div>
<div class="a" style="left:965px;top:286px;width:1px;height:22px;background:#dcdcdc"></div>
<div class="a" style="left:1184px;top:286px;width:1px;height:22px;background:#dcdcdc"></div>
<div class="t" style="left:231px;top:290px;width:44px;text-align:center;"><span class="m">4</span></div>
<div class="t" style="left:277px;top:290px;"><span class="m">0004</span></div>
<div class="t" style="left:397px;top:290px;">严格工序流程<span class="m">B</span></div>
<div class="a" style="left:604px;top:290px;width:13px;height:13px;border:1px solid #8e8f8f;box-shadow:inset 0 0 0 1px #f4f4f4;background:linear-gradient(135deg,#d2d4d8 0%,#eceef0 55%,#fafafa 100%)"></div>
<div class="a" style="left:686px;top:290px;width:13px;height:13px;border:1px solid #8e8f8f;box-shadow:inset 0 0 0 1px #f4f4f4;background:linear-gradient(135deg,#d2d4d8 0%,#eceef0 55%,#fafafa 100%)"></div><svg style="left:688px;top:292px" width="9" height="9" viewBox="0 0 9 9"><path d="M0.8 4.2 L3.6 7.6 L8.4 0.8" stroke="#3a4c9e" stroke-width="2.1" fill="none" stroke-linejoin="round"/></svg>
<div class="t" style="left:750px;top:290px;">系统管理员</div>
<div class="t" style="left:820px;top:290px;width:100px;text-align:center;"><span class="m">2018-10-10</span></div>
<div class="a" style="left:936px;top:290px;width:13px;height:13px;border:1px solid #8e8f8f;box-shadow:inset 0 0 0 1px #f4f4f4;background:linear-gradient(135deg,#d2d4d8 0%,#eceef0 55%,#fafafa 100%)"></div>
<div class="a" style="left:215px;top:463px;width:1008px;height:32px;background:#f0f0f0"></div>
<div class="a" style="left:333px;top:465px;width:110px;height:30px;border:1px solid #80828c;border-bottom:none;background:linear-gradient(180deg,#f4f4f4 0%,#e8e8e8 45%,#d9d9d9 50%,#d2d2d2 100%)"></div>
<div class="t" style="left:333px;top:475px;width:110px;text-align:center;">适用范围</div>
<div class="a" style="left:215px;top:494px;width:1008px;height:161px;border:1px solid #868a94;background:#fff"></div>
<div class="a" style="left:219px;top:463px;width:115px;height:33px;border:1px solid #80828c;border-bottom:none;background:#fff"></div>
<div class="t" style="left:219px;top:475px;width:115px;text-align:center;">工序流程</div>
<div class="a" style="left:217px;top:496px;width:1004px;height:157px;border:1px solid #727272;background:#fff"></div>
<div class="a" style="left:218px;top:497px;width:11px;height:21px;background:linear-gradient(180deg,#fff 0%,#fdfdfd 45%,#f2f2f5 55%,#eeeef2 100%)"></div><div class="a" style="left:229px;top:498px;width:1px;height:20px;background:#dedede"></div>
<div class="a" style="left:229px;top:497px;width:45px;height:21px;background:linear-gradient(180deg,#fff 0%,#fdfdfd 45%,#f2f2f5 55%,#eeeef2 100%)"></div><div class="a" style="left:229px;top:498px;width:1px;height:20px;background:#dedede"></div><div class="a" style="left:274px;top:498px;width:1px;height:20px;background:#dedede"></div>
<div class="t" style="left:230px;top:502px;width:45px;text-align:center;">序号</div>
<div class="a" style="left:274px;top:497px;width:85px;height:21px;background:linear-gradient(180deg,#fff 0%,#fdfdfd 45%,#f2f2f5 55%,#eeeef2 100%)"></div><div class="a" style="left:274px;top:498px;width:1px;height:20px;background:#dedede"></div><div class="a" style="left:359px;top:498px;width:1px;height:20px;background:#dedede"></div>
<div class="t" style="left:275px;top:502px;width:85px;text-align:center;">工序编码</div>
<div class="a" style="left:359px;top:497px;width:110px;height:21px;background:linear-gradient(180deg,#fff 0%,#fdfdfd 45%,#f2f2f5 55%,#eeeef2 100%)"></div><div class="a" style="left:359px;top:498px;width:1px;height:20px;background:#dedede"></div><div class="a" style="left:469px;top:498px;width:1px;height:20px;background:#dedede"></div>
<div class="t" style="left:360px;top:502px;width:110px;text-align:center;">工序名称</div>
<div class="a" style="left:469px;top:497px;width:100px;height:21px;background:linear-gradient(180deg,#fff 0%,#fdfdfd 45%,#f2f2f5 55%,#eeeef2 100%)"></div><div class="a" style="left:469px;top:498px;width:1px;height:20px;background:#dedede"></div><div class="a" style="left:569px;top:498px;width:1px;height:20px;background:#dedede"></div>
<div class="t" style="left:470px;top:502px;width:100px;text-align:center;">生产车间</div>
<div class="a" style="left:569px;top:497px;width:100px;height:21px;background:linear-gradient(180deg,#fff 0%,#fdfdfd 45%,#f2f2f5 55%,#eeeef2 100%)"></div><div class="a" style="left:569px;top:498px;width:1px;height:20px;background:#dedede"></div><div class="a" style="left:669px;top:498px;width:1px;height:20px;background:#dedede"></div>
<div class="t" style="left:570px;top:502px;width:100px;text-align:center;">生产班组</div>
<div class="a" style="left:669px;top:497px;width:70px;height:21px;background:linear-gradient(180deg,#fff 0%,#fdfdfd 45%,#f2f2f5 55%,#eeeef2 100%)"></div><div class="a" style="left:669px;top:498px;width:1px;height:20px;background:#dedede"></div><div class="a" style="left:739px;top:498px;width:1px;height:20px;background:#dedede"></div>
<div class="t" style="left:670px;top:502px;width:70px;text-align:center;">允许超交</div>
<div class="a" style="left:739px;top:497px;width:150px;height:21px;background:linear-gradient(180deg,#fff 0%,#fdfdfd 45%,#f2f2f5 55%,#eeeef2 100%)"></div><div class="a" style="left:739px;top:498px;width:1px;height:20px;background:#dedede"></div><div class="a" style="left:889px;top:498px;width:1px;height:20px;background:#dedede"></div>
<div class="t" style="left:740px;top:502px;width:150px;text-align:center;">积分计算公式</div>
<div class="a" style="left:218px;top:518px;width:671px;height:1px;background:#dcdcdc"></div>
<div class="a" style="left:218px;top:519px;width:12px;height:22px;background:linear-gradient(180deg,#fff 0%,#fff 40%,#eeeeee 100%);border-right:1px solid #d8d8d8;border-bottom:1px solid #d8d8d8"></div>
<div class="a" style="left:230px;top:519px;width:660px;height:22px;background:#eef6fe;border-bottom:1px solid #dcdcdc"></div>
<div class="a" style="left:274px;top:519px;width:1px;height:22px;background:#dcdcdc"></div>
<div class="a" style="left:359px;top:519px;width:1px;height:22px;background:#dcdcdc"></div>
<div class="a" style="left:469px;top:519px;width:1px;height:22px;background:#dcdcdc"></div>
<div class="a" style="left:569px;top:519px;width:1px;height:22px;background:#dcdcdc"></div>
<div class="a" style="left:669px;top:519px;width:1px;height:22px;background:#dcdcdc"></div>
<div class="a" style="left:739px;top:519px;width:1px;height:22px;background:#dcdcdc"></div>
<div class="a" style="left:889px;top:519px;width:1px;height:22px;background:#dcdcdc"></div>
<div class="t" style="left:230px;top:523px;width:44px;text-align:center;"><span class="m">1</span></div>
<div class="t" style="left:276px;top:523px;"><span class="m">02</span></div>
<div class="t" style="left:362px;top:522px;">冷镦</div>
<div class="t" style="left:472px;top:522px;">生产部</div>
<div class="t" style="left:572px;top:522px;">生产二部</div>
<div class="a" style="left:698px;top:523px;width:13px;height:13px;border:1px solid #8e8f8f;box-shadow:inset 0 0 0 1px #f4f4f4;background:linear-gradient(135deg,#d2d4d8 0%,#eceef0 55%,#fafafa 100%)"></div><svg style="left:700px;top:525px" width="9" height="9" viewBox="0 0 9 9"><path d="M0.8 4.2 L3.6 7.6 L8.4 0.8" stroke="#3a4c9e" stroke-width="2.1" fill="none" stroke-linejoin="round"/></svg>
<div class="t" style="left:744px;top:522px;"><span class="m" style="letter-spacing:2px">{</span>工序得分<span class="m" style="letter-spacing:2.4px">} :={</span>重量<span class="m">}</span></div>
<div class="a" style="left:221px;top:526px;width:4px;height:7px;background:#000;clip-path:polygon(0 0,100% 50%,0 100%)"></div>
<div class="a" style="left:218px;top:541px;width:12px;height:22px;background:linear-gradient(180deg,#fff 0%,#fff 40%,#eeeeee 100%);border-right:1px solid #d8d8d8;border-bottom:1px solid #d8d8d8"></div>
<div class="a" style="left:230px;top:541px;width:660px;height:22px;background:#f6f4fc;border-bottom:1px solid #dcdcdc"></div>
<div class="a" style="left:274px;top:541px;width:1px;height:22px;background:#dcdcdc"></div>
<div class="a" style="left:359px;top:541px;width:1px;height:22px;background:#dcdcdc"></div>
<div class="a" style="left:469px;top:541px;width:1px;height:22px;background:#dcdcdc"></div>
<div class="a" style="left:569px;top:541px;width:1px;height:22px;background:#dcdcdc"></div>
<div class="a" style="left:669px;top:541px;width:1px;height:22px;background:#dcdcdc"></div>
<div class="a" style="left:739px;top:541px;width:1px;height:22px;background:#dcdcdc"></div>
<div class="a" style="left:889px;top:541px;width:1px;height:22px;background:#dcdcdc"></div>
<div class="t" style="left:230px;top:545px;width:44px;text-align:center;"><span class="m">2</span></div>
<div class="t" style="left:276px;top:545px;"><span class="m">03</span></div>
<div class="t" style="left:362px;top:544px;">搓牙</div>
<div class="t" style="left:472px;top:544px;">生产部</div>
<div class="t" style="left:572px;top:544px;">生产三部</div>
<div class="a" style="left:698px;top:545px;width:13px;height:13px;border:1px solid #8e8f8f;box-shadow:inset 0 0 0 1px #f4f4f4;background:linear-gradient(135deg,#d2d4d8 0%,#eceef0 55%,#fafafa 100%)"></div><svg style="left:700px;top:547px" width="9" height="9" viewBox="0 0 9 9"><path d="M0.8 4.2 L3.6 7.6 L8.4 0.8" stroke="#3a4c9e" stroke-width="2.1" fill="none" stroke-linejoin="round"/></svg>
<div class="t" style="left:744px;top:544px;"><span class="m" style="letter-spacing:2px">{</span>工序得分<span class="m" style="letter-spacing:2.4px">} :={</span>重量<span class="m">}</span></div>
<div class="a" style="left:218px;top:563px;width:12px;height:22px;background:linear-gradient(180deg,#fff 0%,#fff 40%,#eeeeee 100%);border-right:1px solid #d8d8d8;border-bottom:1px solid #d8d8d8"></div>
<div class="a" style="left:230px;top:563px;width:660px;height:22px;background:#eef6fe;border-bottom:1px solid #dcdcdc"></div>
<div class="a" style="left:274px;top:563px;width:1px;height:22px;background:#dcdcdc"></div>
<div class="a" style="left:359px;top:563px;width:1px;height:22px;background:#dcdcdc"></div>
<div class="a" style="left:469px;top:563px;width:1px;height:22px;background:#dcdcdc"></div>
<div class="a" style="left:569px;top:563px;width:1px;height:22px;background:#dcdcdc"></div>
<div class="a" style="left:669px;top:563px;width:1px;height:22px;background:#dcdcdc"></div>
<div class="a" style="left:739px;top:563px;width:1px;height:22px;background:#dcdcdc"></div>
<div class="a" style="left:889px;top:563px;width:1px;height:22px;background:#dcdcdc"></div>
<div class="t" style="left:230px;top:567px;width:44px;text-align:center;"><span class="m">3</span></div>
<div class="t" style="left:276px;top:567px;"><span class="m">04</span></div>
<div class="t" style="left:362px;top:566px;">组合</div>
<div class="t" style="left:472px;top:566px;">生产部</div>
<div class="t" style="left:572px;top:566px;">生产四部</div>
<div class="a" style="left:698px;top:567px;width:13px;height:13px;border:1px solid #8e8f8f;box-shadow:inset 0 0 0 1px #f4f4f4;background:linear-gradient(135deg,#d2d4d8 0%,#eceef0 55%,#fafafa 100%)"></div>
<div class="t" style="left:744px;top:566px;"><span class="m" style="letter-spacing:2px">{</span>工序得分<span class="m" style="letter-spacing:2.4px">} :={</span>重量<span class="m">}</span></div>
<div class="a" style="left:218px;top:585px;width:12px;height:22px;background:linear-gradient(180deg,#fff 0%,#fff 40%,#eeeeee 100%);border-right:1px solid #d8d8d8;border-bottom:1px solid #d8d8d8"></div>
<div class="a" style="left:230px;top:585px;width:660px;height:22px;background:#f6f4fc;border-bottom:1px solid #dcdcdc"></div>
<div class="a" style="left:274px;top:585px;width:1px;height:22px;background:#dcdcdc"></div>
<div class="a" style="left:359px;top:585px;width:1px;height:22px;background:#dcdcdc"></div>
<div class="a" style="left:469px;top:585px;width:1px;height:22px;background:#dcdcdc"></div>
<div class="a" style="left:569px;top:585px;width:1px;height:22px;background:#dcdcdc"></div>
<div class="a" style="left:669px;top:585px;width:1px;height:22px;background:#dcdcdc"></div>
<div class="a" style="left:739px;top:585px;width:1px;height:22px;background:#dcdcdc"></div>
<div class="a" style="left:889px;top:585px;width:1px;height:22px;background:#dcdcdc"></div>
<div class="t" style="left:230px;top:589px;width:44px;text-align:center;"><span class="m">4</span></div>
<div class="t" style="left:276px;top:589px;"><span class="m">05</span></div>
<div class="t" style="left:362px;top:588px;">开槽</div>
<div class="t" style="left:472px;top:588px;">生产部</div>
<div class="t" style="left:572px;top:588px;">生产五部</div>
<div class="a" style="left:698px;top:589px;width:13px;height:13px;border:1px solid #8e8f8f;box-shadow:inset 0 0 0 1px #f4f4f4;background:linear-gradient(135deg,#d2d4d8 0%,#eceef0 55%,#fafafa 100%)"></div>
<div class="t" style="left:744px;top:588px;"><span class="m" style="letter-spacing:2px">{</span>工序得分<span class="m" style="letter-spacing:2.4px">} :={</span>重量<span class="m">}</span></div>
<div class="a" style="left:218px;top:607px;width:12px;height:22px;background:linear-gradient(180deg,#fff 0%,#fff 40%,#eeeeee 100%);border-right:1px solid #d8d8d8;border-bottom:1px solid #d8d8d8"></div>
<div class="a" style="left:230px;top:607px;width:660px;height:22px;background:#eef6fe;border-bottom:1px solid #dcdcdc"></div>
<div class="a" style="left:274px;top:607px;width:1px;height:22px;background:#dcdcdc"></div>
<div class="a" style="left:359px;top:607px;width:1px;height:22px;background:#dcdcdc"></div>
<div class="a" style="left:469px;top:607px;width:1px;height:22px;background:#dcdcdc"></div>
<div class="a" style="left:569px;top:607px;width:1px;height:22px;background:#dcdcdc"></div>
<div class="a" style="left:669px;top:607px;width:1px;height:22px;background:#dcdcdc"></div>
<div class="a" style="left:739px;top:607px;width:1px;height:22px;background:#dcdcdc"></div>
<div class="a" style="left:889px;top:607px;width:1px;height:22px;background:#dcdcdc"></div>
<div class="t" style="left:230px;top:611px;width:44px;text-align:center;"><span class="m">5</span></div>
<div class="t" style="left:276px;top:611px;"><span class="m">06</span></div>
<div class="t" style="left:362px;top:610px;">割尾</div>
<div class="t" style="left:472px;top:610px;">生产部</div>
<div class="t" style="left:572px;top:610px;">生产六部</div>
<div class="a" style="left:698px;top:611px;width:13px;height:13px;border:1px solid #8e8f8f;box-shadow:inset 0 0 0 1px #f4f4f4;background:linear-gradient(135deg,#d2d4d8 0%,#eceef0 55%,#fafafa 100%)"></div>
<div class="t" style="left:744px;top:610px;"><span class="m" style="letter-spacing:2px">{</span>工序得分<span class="m" style="letter-spacing:2.4px">} :={</span>重量<span class="m">}</span></div>
<div class="a" style="left:218px;top:629px;width:12px;height:22px;background:linear-gradient(180deg,#fff 0%,#fff 40%,#eeeeee 100%);border-right:1px solid #d8d8d8;border-bottom:1px solid #d8d8d8"></div>
<div class="a" style="left:230px;top:629px;width:660px;height:22px;background:#f6f4fc;border-bottom:1px solid #dcdcdc"></div>
<div class="a" style="left:274px;top:629px;width:1px;height:22px;background:#dcdcdc"></div>
<div class="a" style="left:359px;top:629px;width:1px;height:22px;background:#dcdcdc"></div>
<div class="a" style="left:469px;top:629px;width:1px;height:22px;background:#dcdcdc"></div>
<div class="a" style="left:569px;top:629px;width:1px;height:22px;background:#dcdcdc"></div>
<div class="a" style="left:669px;top:629px;width:1px;height:22px;background:#dcdcdc"></div>
<div class="a" style="left:739px;top:629px;width:1px;height:22px;background:#dcdcdc"></div>
<div class="a" style="left:889px;top:629px;width:1px;height:22px;background:#dcdcdc"></div>
<div class="t" style="left:230px;top:633px;width:44px;text-align:center;"><span class="m">6</span></div>
<div class="t" style="left:276px;top:633px;"><span class="m">07</span></div>
<div class="t" style="left:362px;top:632px;">清洗</div>
<div class="t" style="left:472px;top:632px;">生产部</div>
<div class="t" style="left:572px;top:632px;">生产七部</div>
<div class="a" style="left:698px;top:633px;width:13px;height:13px;border:1px solid #8e8f8f;box-shadow:inset 0 0 0 1px #f4f4f4;background:linear-gradient(135deg,#d2d4d8 0%,#eceef0 55%,#fafafa 100%)"></div>
<div class="t" style="left:744px;top:632px;"><span class="m" style="letter-spacing:2px">{</span>工序得分<span class="m" style="letter-spacing:2.4px">} :={</span>重量<span class="m">}</span></div>
<div class="a" style="left:218px;top:651px;width:12px;height:1px;background:linear-gradient(180deg,#fff 0%,#fff 40%,#eeeeee 100%);border-right:1px solid #d8d8d8;border-bottom:1px solid #d8d8d8"></div>
<div class="a" style="left:230px;top:651px;width:660px;height:1px;background:#eef6fe;border-bottom:1px solid #dcdcdc"></div>
<div class="a" style="left:274px;top:651px;width:1px;height:1px;background:#dcdcdc"></div>
<div class="a" style="left:359px;top:651px;width:1px;height:1px;background:#dcdcdc"></div>
<div class="a" style="left:469px;top:651px;width:1px;height:1px;background:#dcdcdc"></div>
<div class="a" style="left:569px;top:651px;width:1px;height:1px;background:#dcdcdc"></div>
<div class="a" style="left:669px;top:651px;width:1px;height:1px;background:#dcdcdc"></div>
<div class="a" style="left:739px;top:651px;width:1px;height:1px;background:#dcdcdc"></div>
<div class="a" style="left:889px;top:651px;width:1px;height:1px;background:#dcdcdc"></div>
<div class="a" style="left:1203px;top:497px;width:17px;height:155px;background:#f0f0f0;border-left:1px solid #e8e8e8"></div>
<div class="a" style="left:1207px;top:503px;width:7px;height:4px;background:#404040;clip-path:polygon(50% 0,100% 100%,0 100%)"></div>
<div class="a" style="left:1207px;top:642px;width:7px;height:4px;background:#404040;clip-path:polygon(0 0,100% 0,50% 100%)"></div>
<div class="a" style="left:1204px;top:514px;width:14px;height:103px;border:1px solid #a8a8a8;border-radius:2px;background:linear-gradient(90deg,#f4f4f4 0%,#ececec 45%,#d8d8d8 55%,#d0d0d0 100%)"></div>
<div class="a" style="left:1208px;top:562px;width:6px;height:1px;background:#606060"></div>
<div class="a" style="left:1208px;top:564px;width:6px;height:1px;background:#606060"></div>
<div class="a" style="left:1208px;top:566px;width:6px;height:1px;background:#606060"></div>
<div class="a" style="left:8px;top:655px;width:1218px;height:2px;background:#fff"></div>
<div class="a" style="left:7px;top:657px;width:1219px;height:1px;background:#84868e"></div>
<div class="a" style="left:7px;top:658px;width:1219px;height:27px;background:linear-gradient(180deg,#dcdcdc 0%,#f0f0f0 30%,#f0f0f0 100%)"></div>
<svg style="left:11px;top:665px" width="16" height="16" viewBox="0 0 16 16"><rect x="0" y="0" width="16" height="16" rx="1" fill="#d81e14"/><g transform="translate(0.4,-0.4) scale(0.47)"><path d="M5 10 Q7 9 9.5 10 L11.5 15 Q16 8 23.5 5.8 L24 11 Q17 13 13 18 Q11.5 21 12.5 23.5 Q14 26 16 27.5 Q9 27 6.5 22 Q5 17 5 10 Z" fill="#fff"/><path d="M4.5 24 Q7 31 14 31.5 Q23 31.5 27 23 Q28.5 19 29 15 Q24 17 21 19.5 Q18 22 16.5 24.5 Q20 23 23 21.5 Q21 27 14 28.5 Q8 28.5 4.5 24 Z" fill="#fff"/></g></svg>
<div class="t" style="left:30px;top:667px;">应用中心：<span class="m" style="letter-spacing:0.8px">127.0.0.1:7099</span></div>
<div class="a" style="left:206px;top:665px;width:1px;height:17px;background:#c8c8c8;box-shadow:1px 0 0 #fff"></div>
<div class="a" style="left:329px;top:665px;width:1px;height:17px;background:#c8c8c8;box-shadow:1px 0 0 #fff"></div>
<div class="a" style="left:552px;top:665px;width:1px;height:17px;background:#c8c8c8;box-shadow:1px 0 0 #fff"></div>
<div class="a" style="left:736px;top:665px;width:1px;height:17px;background:#c8c8c8;box-shadow:1px 0 0 #fff"></div>
<div class="a" style="left:1024px;top:665px;width:1px;height:17px;background:#c8c8c8;box-shadow:1px 0 0 #fff"></div>
<div class="a" style="left:1204px;top:665px;width:1px;height:17px;background:#c8c8c8;box-shadow:1px 0 0 #fff"></div>
<svg style="left:215px;top:666px" width="15" height="15" viewBox="0 0 15 15"><defs><radialGradient id="ck" cx="0.4" cy="0.3" r="0.7"><stop offset="0" stop-color="#7ee06a"/><stop offset="1" stop-color="#119a1a"/></radialGradient></defs><circle cx="7.5" cy="7.5" r="7" fill="url(#ck)" stroke="#0c7a14" stroke-width="0.6"/><path d="M3.8 7.6 L6.4 10.2 L11.2 4.6" stroke="#fff" stroke-width="2.2" fill="none"/></svg>
<div class="t" style="left:232px;top:667px;">连接状态：正常</div>
<div class="t" style="left:343px;top:667px;">账套：演示账套<span class="m">(2017</span>年第<span class="m">1</span>期<span class="m">)</span></div>
<div class="t" style="left:567px;top:667px;">操作员：系统管理员<span class="m">(admin)</span></div>
<div class="t" style="left:750px;top:667px;">正式版 授权序列号：<span class="m">pc006</span></div>
<svg style="left:1035px;top:667px" width="16" height="12" viewBox="0 0 16 12"><rect x="0.5" y="0.5" width="15" height="11" fill="#eaf4fc" stroke="#5a9ad8" stroke-width="1"/><path d="M0.5 0.5 L8 7 L15.5 0.5" fill="none" stroke="#5a9ad8" stroke-width="1"/></svg>
<div class="t" style="left:1056px;top:667px;text-decoration:underline">消息提醒中心</div>
<div class="a" style="left:1221px;top:673px;width:2px;height:2px;background:#a0a0a0;box-shadow:1px 1px 0 #fff"></div>
<div class="a" style="left:1218px;top:676px;width:2px;height:2px;background:#a0a0a0;box-shadow:1px 1px 0 #fff"></div>
<div class="a" style="left:1221px;top:676px;width:2px;height:2px;background:#a0a0a0;box-shadow:1px 1px 0 #fff"></div>
</body></html>
